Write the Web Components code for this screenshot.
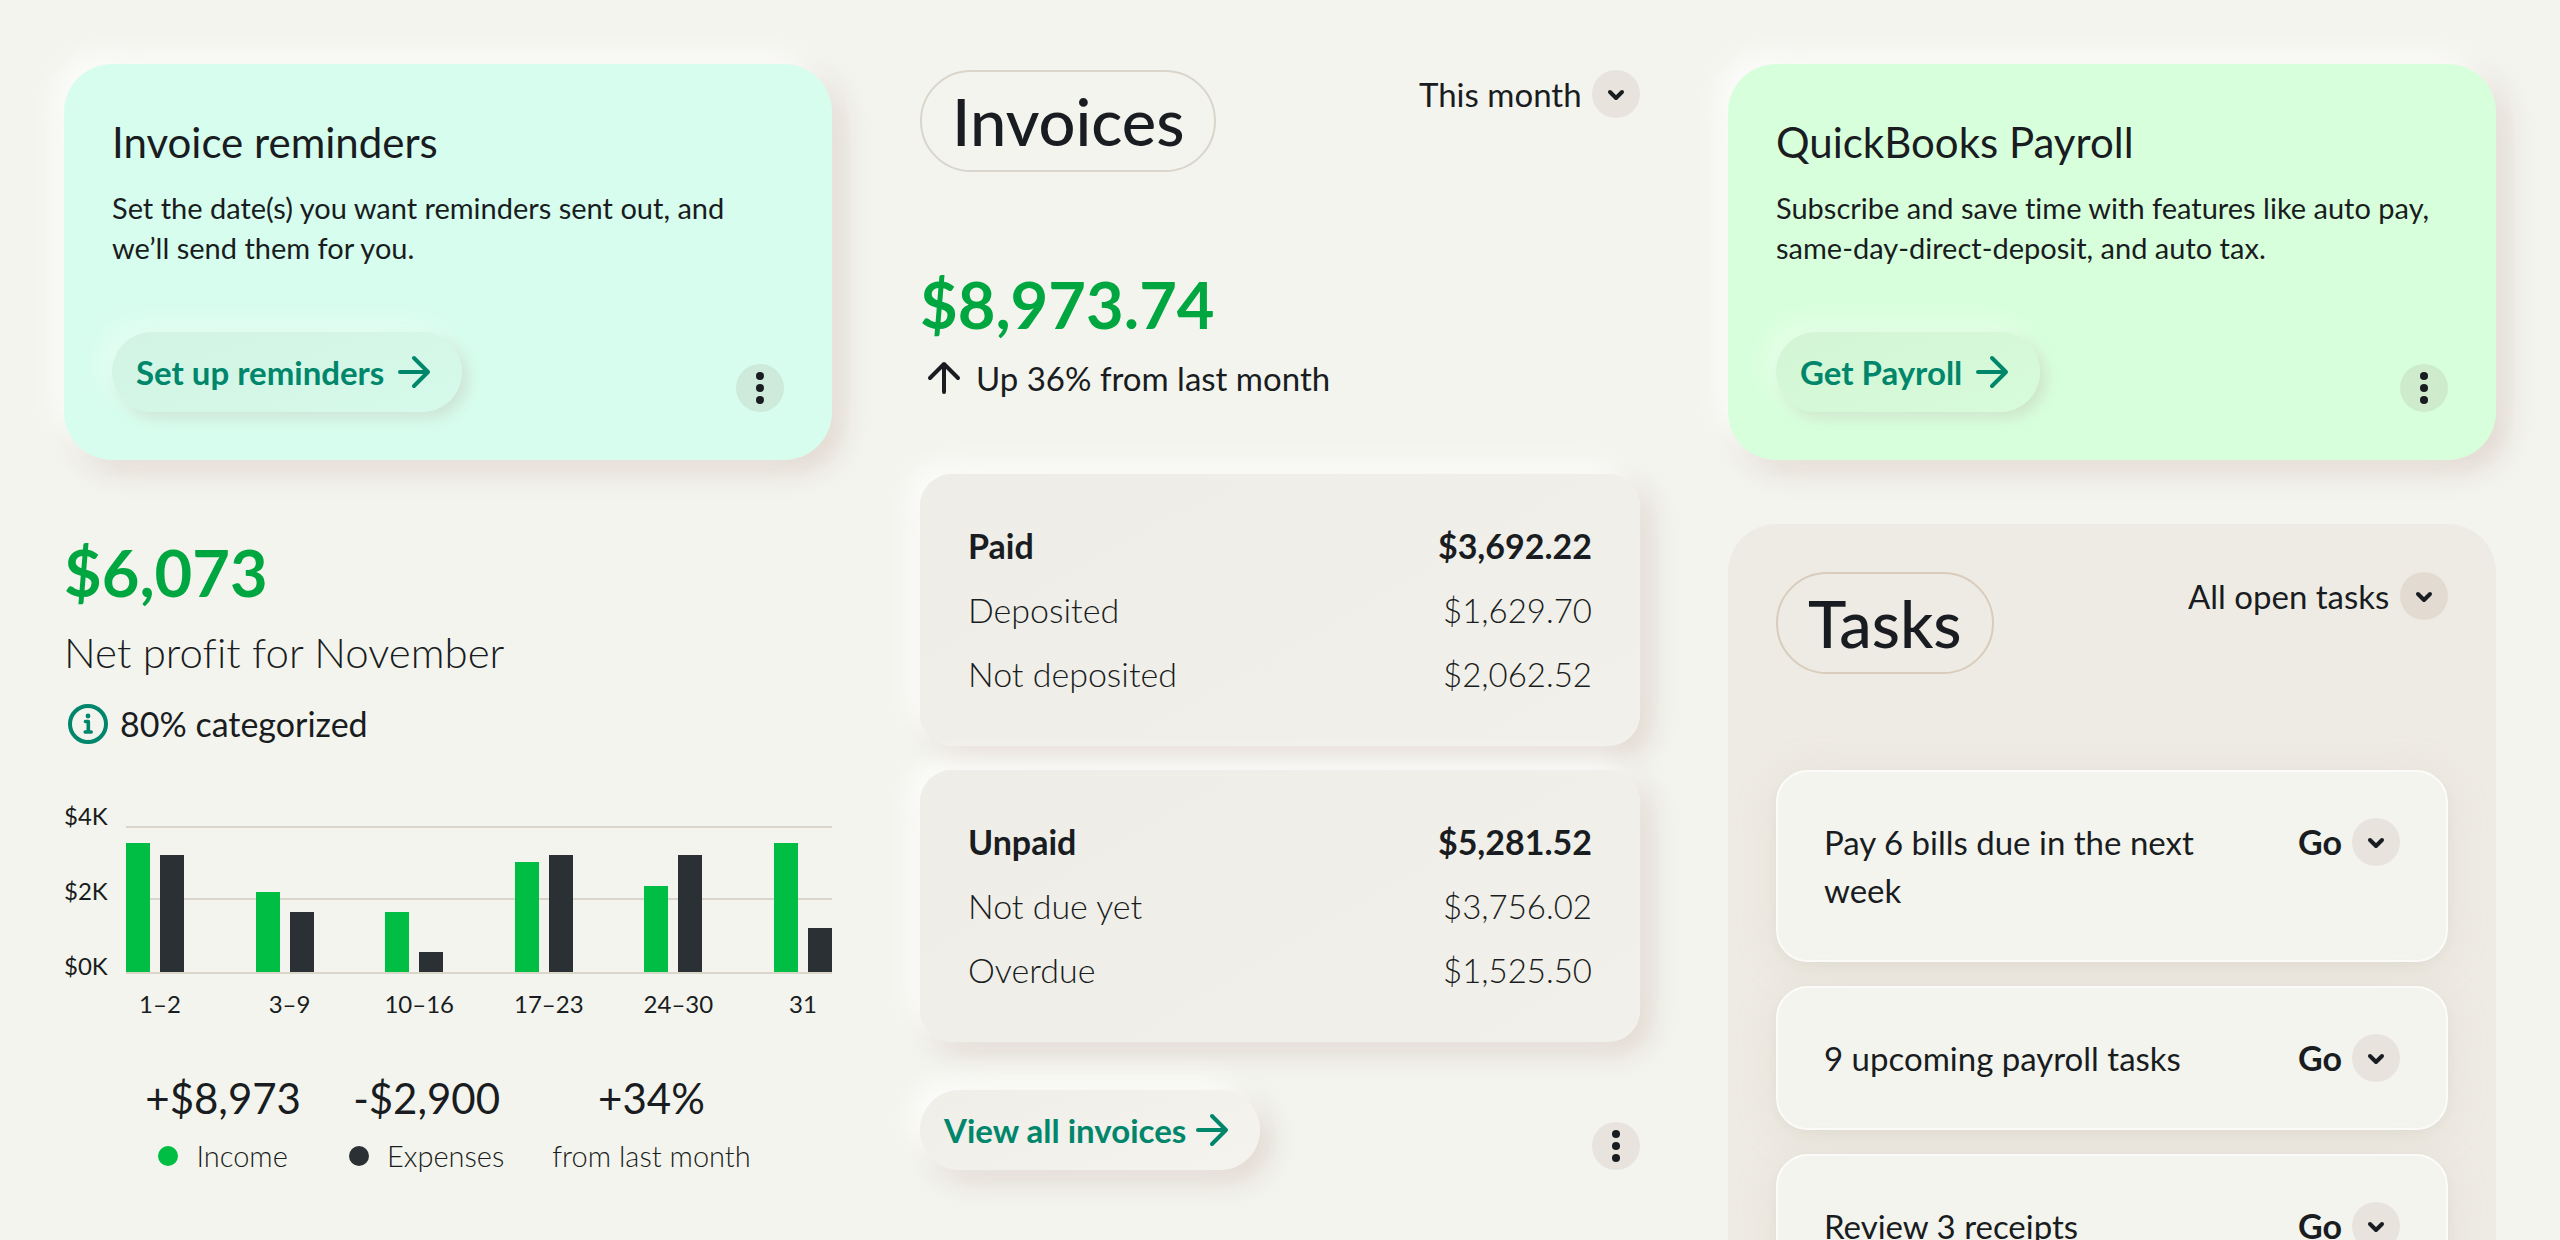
<!DOCTYPE html>
<html lang="en">
<head>
<meta charset="utf-8">
<title>Business overview</title>
<style>
  :root {
    --bg: #f3f4ee;
    --ink: #191c20;
    --teal: #00866b;
    --money: #00a63f;
    --income: #00be43;
    --expense: #2b3035;
    --line: #dad5ca;
    --chip: #e8e3dc;
    --raised: -10px -10px 28px rgba(255,255,255,.85), 10px 10px 28px rgba(200,175,163,.45);
    --t-s: 24px; --t-m: 29px; --t-l: 33px; --t-row: 34px; --t-xl: 42px; --t-xxl: 65px;
  }
  body {
    margin: 0;
    background: var(--bg);
    color: var(--ink);
    font-family: Lato, "Open Sans", "Liberation Sans", sans-serif;
    font-size: var(--t-l);
    line-height: 48px;
    font-variant-ligatures: none;
  }
</style>
</head>
<body>
<dash-board>
  <dash-column slot="left">
    <promo-card tint="mint" heading="Invoice reminders" action="Set up reminders">Set the date(s) you want reminders sent out, and we’ll send them for you.</promo-card>
    <profit-panel></profit-panel>
  </dash-column>
  <dash-column slot="middle">
    <invoices-panel></invoices-panel>
  </dash-column>
  <dash-column slot="right">
    <promo-card tint="lime" heading="QuickBooks Payroll" action="Get Payroll">Subscribe and save time with features like auto pay, same-day-direct-deposit, and auto tax.</promo-card>
    <tasks-panel>
      <task-card>Pay 6 bills due in the next week</task-card>
      <task-card>9 upcoming payroll tasks</task-card>
      <task-card>Review 3 receipts</task-card>
    </tasks-panel>
  </dash-column>
</dash-board>

<script>
const define = (name, html) => customElements.define(name, class extends HTMLElement {
  constructor() {
    super();
    this.attachShadow({ mode: 'open' });
  }
  connectedCallback() {
    const markup = typeof html === 'function' ? html(this) : html;
    this.shadowRoot.innerHTML = '<style>*{box-sizing:border-box}h2,p{margin:0;font:inherit}button,select{font:inherit;color:inherit;background:none;border:0;margin:0;padding:0}svg{display:block;flex:none}</style>' + markup;
  }
});

define('dash-board', `
  <style>
    :host { display: grid; grid-template-columns: 16fr 15fr 16fr; column-gap: 88px;
      padding: 64px 64px 0; box-sizing: border-box; height: 100vh; overflow-y: auto; scrollbar-width: none; }
  </style>
  <slot name="left"></slot><slot name="middle"></slot><slot name="right"></slot>`);

define('dash-column', `
  <style>:host { display: flex; flex-direction: column; gap: 64px; min-width: 0; }</style>
  <slot></slot>`);

define('chevron-chip', `
  <style>
    :host { display: grid; place-items: center; width: 48px; height: 48px; border-radius: 50%;
      background: var(--chip); flex: none; pointer-events: none; }
  </style>
  <svg width="24" height="24" viewBox="0 0 24 24" fill="none" stroke="currentColor" stroke-width="4" stroke-linecap="round" stroke-linejoin="round" aria-hidden="true"><path d="M6 10l6 6 6-6"/></svg>`);

define('more-button', `
  <style>
    :host { display: block; flex: none; }
    button { display: grid; place-items: center; width: 48px; height: 48px; border-radius: 50%; background: var(--chip); }
  </style>
  <button type="button" aria-label="More options">
    <svg width="48" height="48" viewBox="0 0 48 48" fill="currentColor" aria-hidden="true"><circle cx="24" cy="12" r="4"/><circle cx="24" cy="24" r="4"/><circle cx="24" cy="36" r="4"/></svg>
  </button>`);

define('action-button', `
  <style>
    :host { display: block; }
    button { display: flex; align-items: center; gap: var(--icon-gap, 6px); height: 80px; padding: 0 24px;
      border-radius: 40px; color: var(--teal); font-weight: 700; white-space: nowrap;
      background: var(--btn, linear-gradient(160deg, #efeee9, #f4f3ee)); box-shadow: var(--btn-shadow, var(--raised)); }
  </style>
  <button type="button"><slot></slot>
    <svg width="48" height="48" viewBox="0 0 48 48" fill="none" stroke="currentColor" stroke-width="4" stroke-linecap="round" stroke-linejoin="round" aria-hidden="true"><path d="M10 24h28M24 10l14 14-14 14"/></svg>
  </button>`);

define('pill-title', `
  <style>
    :host { display: block; }
    h2 { border: 2px solid var(--pill-line, var(--line)); border-radius: 51px; height: 102px; padding: 0 30px;
      font-size: var(--t-xxl); line-height: 98px; font-weight: 500; }
  </style>
  <h2><slot></slot></h2>`);

define('filter-select', el => `
  <style>
    :host { display: block; }
    label { display: grid; align-items: center; justify-items: end; height: 48px; }
    select, chevron-chip { grid-area: 1 / 1; }
    select { appearance: none; height: 48px; padding-right: 58px; cursor: pointer; }
  </style>
  <label><select aria-label="${el.getAttribute('label')}"><option>${el.getAttribute('value')}</option></select><chevron-chip></chevron-chip></label>`);

define('panel-head', `
  <style>:host { display: flex; justify-content: space-between; align-items: flex-start; }</style>
  <slot></slot>`);

define('promo-card', el => `
  <style>
    :host { display: block; padding: 48px; border-radius: 48px; box-shadow: var(--raised); background: #d7fdee;
      --chip: #cdeadb; --btn: linear-gradient(160deg, #d3f4e5, #d5f9ea);
      --btn-shadow: -10px -10px 24px rgba(255,255,255,.35), 6px 6px 14px rgba(190,190,175,.4); }
    :host([tint="lime"]) { background: #d8ffdc; --chip: #ceeccb; --btn: linear-gradient(160deg, #d3f5d5, #d7fcda); }
    h2 { font-size: var(--t-xl); line-height: 60px; padding-bottom: 16px; }
    p { font-size: var(--t-m); line-height: 40px; padding-bottom: 64px; }
    footer { display: flex; justify-content: space-between; align-items: flex-end; }
  </style>
  <h2>${el.getAttribute('heading')}</h2>
  <p><slot></slot></p>
  <footer><action-button>${el.getAttribute('action')}</action-button><more-button></more-button></footer>`);

const bars = [['1–2', 129, 117], ['3–9', 80, 60], ['10–16', 60, 20], ['17–23', 110, 117], ['24–30', 86, 117], ['31', 129, 44]];

define('bar-chart', `
  <style>
    :host { display: grid; grid-template-columns: 62px 1fr; font-size: var(--t-s); line-height: 32px; }
    .scale { display: flex; flex-direction: column; justify-content: space-between; height: 182px; }
    .plot { display: flex; justify-content: space-between; align-items: flex-end; height: 164px; margin-top: 10px;
      background: linear-gradient(var(--line), var(--line)) 0 16px / 100% 2px no-repeat,
        linear-gradient(var(--line), var(--line)) 0 88px / 100% 2px no-repeat,
        linear-gradient(var(--line), var(--line)) 0 100% / 100% 2px no-repeat; }
    .pair { display: flex; justify-content: space-between; align-items: flex-end; width: 58px; margin-bottom: 2px; }
    .bar { width: 24px; background: var(--income); }
    .bar + .bar { background: var(--expense); }
    .ticks { display: flex; justify-content: space-between; grid-column: 2; padding-top: 6px; }
    .ticks span { width: 68px; display: flex; justify-content: center; white-space: nowrap; }
    .ticks span:last-child { width: 58px; }
  </style>
  <div class="scale"><span>$4K</span><span>$2K</span><span>$0K</span></div>
  <div class="plot">${bars.map(b => `<div class="pair"><div class="bar" style="height:${b[1]}px"></div><div class="bar" style="height:${b[2]}px"></div></div>`).join('')}</div>
  <div class="ticks">${bars.map(b => `<span>${b[0]}</span>`).join('')}</div>`);

define('legend-stat', el => `
  <style>
    :host { display: flex; flex-direction: column; align-items: center; }
    strong { font-weight: 400; font-size: var(--t-xl); line-height: 60px; }
    span { display: flex; align-items: center; gap: 18px; font-size: var(--t-m); line-height: 56px; font-weight: 300; white-space: nowrap; }
    i { width: 20px; height: 20px; border-radius: 50%; background: ${el.getAttribute('dot')}; }
  </style>
  <strong>${el.getAttribute('value')}</strong>
  <span>${el.hasAttribute('dot') ? '<i></i>' : ''}<slot></slot></span>`);

define('profit-panel', `
  <style>
    :host { display: flex; flex-direction: column; }
    .total { font-size: var(--t-xxl); line-height: 96px; font-weight: 700; color: var(--money); }
    .what { font-size: var(--t-xl); line-height: 64px; font-weight: 300; padding-bottom: 16px; }
    .cat { display: flex; align-items: center; gap: 8px; padding-bottom: 52px; font-size: var(--t-row); }
    svg { color: var(--teal); }
    .legend { display: flex; justify-content: center; gap: 48px; padding-top: 48px; }
  </style>
  <div class="total">$6,073</div>
  <h2 class="what">Net profit for November</h2>
  <div class="cat">
    <svg width="48" height="48" viewBox="0 0 48 48" fill="none" stroke="currentColor" stroke-linecap="round" stroke-linejoin="round" aria-hidden="true"><circle cx="24" cy="24" r="18" stroke-width="4"/><circle cx="24" cy="16" r="2.4" fill="currentColor" stroke="none"/><path d="M21.500 21.500h2.800v10M21.200 32h6" stroke-width="3.600"/></svg>
    <span>80% categorized</span>
  </div>
  <bar-chart></bar-chart>
  <div class="legend">
    <legend-stat value="+$8,973" dot="var(--income)">Income</legend-stat>
    <legend-stat value="-$2,900" dot="var(--expense)">Expenses</legend-stat>
    <legend-stat value="+34%">from last month</legend-stat>
  </div>`);

define('amount-card', el => `
  <style>
    :host { display: block; padding: 40px 48px; border-radius: 32px; box-shadow: var(--raised);
      background: linear-gradient(150deg, #eeede8, #f1f0ea); }
    table { width: 100%; border-collapse: collapse; line-height: 64px; font-size: var(--t-row); font-weight: 300; }
    th, td { padding: 0; text-align: left; font-weight: inherit; }
    td { text-align: right; }
    tr + tr td { font-size: var(--t-l); }
    tr:first-child { font-weight: 700; }
  </style>
  <table>${el.getAttribute('rows').split(';').map(r => r.split('|')).map(([a, b]) => `<tr><th scope="row">${a}</th><td>${b}</td></tr>`).join('')}</table>`);

define('invoices-panel', `
  <style>
    :host { display: flex; flex-direction: column; padding-top: 6px; }
    .total { font-size: var(--t-xxl); line-height: 96px; font-weight: 700; color: var(--money); padding-top: 84px; }
    .trend { display: flex; align-items: center; gap: 8px; padding: 2px 0 72px; }
    .cards { display: flex; flex-direction: column; gap: 24px; }
    footer { display: flex; justify-content: space-between; align-items: flex-end; padding-top: 48px; --icon-gap: 2px; }
  </style>
  <panel-head><pill-title>Invoices</pill-title><filter-select label="Period" value="This month"></filter-select></panel-head>
  <div class="total">$8,973.74</div>
  <div class="trend">
    <svg width="48" height="48" viewBox="0 0 48 48" fill="none" stroke="currentColor" stroke-width="4" stroke-linecap="round" stroke-linejoin="round" aria-hidden="true"><path d="M24 38V10M10 24l14-14 14 14"/></svg>
    <span>Up 36% from last month</span>
  </div>
  <div class="cards">
    <amount-card rows="Paid|$3,692.22;Deposited|$1,629.70;Not deposited|$2,062.52"></amount-card>
    <amount-card rows="Unpaid|$5,281.52;Not due yet|$3,756.02;Overdue|$1,525.50"></amount-card>
  </div>
  <footer><action-button>View all invoices</action-button><more-button></more-button></footer>`);

define('task-card', `
  <style>
    :host { display: flex; justify-content: space-between; align-items: flex-start; padding: 46px; border: 2px solid #fbfbf9;
      border-radius: 32px; background: var(--bg); box-shadow: 0 6px 40px rgba(200,190,175,.22), 0 4px 8px rgba(200,195,180,.18); --chip: #e8e3dc; }
    p { flex: 0 1 400px; }
    button { display: flex; align-items: center; gap: 10px; font-size: var(--t-row); font-weight: 700; }
  </style>
  <p><slot></slot></p>
  <button type="button">Go<chevron-chip></chevron-chip></button>`);

define('tasks-panel', `
  <style>
    :host { display: flex; flex-direction: column; flex: 1 0 auto; padding: 48px; border-radius: 48px 48px 0 0; background: #eeebe4;
      --pill-line: #d8ccbd; --chip: #e3dbd2; }
    .list { display: flex; flex-direction: column; gap: 24px; padding-top: 96px; }
  </style>
  <panel-head><pill-title>Tasks</pill-title><filter-select label="Task filter" value="All open tasks"></filter-select></panel-head>
  <div class="list"><slot></slot></div>`);
</script>
</body>
</html>
